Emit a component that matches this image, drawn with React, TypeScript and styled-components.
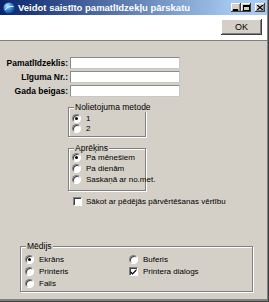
import React from "react";
import styled, { createGlobalStyle } from "styled-components";

const Global = createGlobalStyle`
  html, body { margin: 0; padding: 0; background: #d4d0c8; }
  body { font-family: "Liberation Sans", Arial, sans-serif; font-size: 8px; color: #000; }
  * { box-sizing: border-box; }
`;

const Window = styled.div`
  width: 269px;
  height: 302px;
  display: flex;
  flex-direction: column;
  background: #d4d0c8;
  border-right: 1px solid #404040;
  border-bottom: 1px solid #404040;
  overflow: hidden;
`;

const Frame = styled.div`
  flex: 1;
  min-height: 0;
  display: flex;
  flex-direction: column;
  border-right: 1px solid #808080;
  border-bottom: 2px solid #808080;
`;

const TitleBar = styled.div`
  height: 15px;
  flex: none;
  display: flex;
  align-items: center;
  padding: 0 2px 0 3px;
  background: linear-gradient(to right, #0a246a 0%, #a6caf0 88%);
  color: #fff;
  font-weight: bold;
  font-size: 9.5px;
`;

const TitleText = styled.span`
  margin-left: 3px;
  flex: 1;
  white-space: nowrap;
  line-height: 15px;
`;

const CaptionButton = styled.div<{ $sep?: boolean }>`
  width: 10px;
  height: 9px;
  margin-left: ${(p) => (p.$sep ? "4px" : "0")};
  background: #d4d0c8;
  box-shadow: inset -1px -1px 0 #404040, inset 1px 1px 0 #fff, inset -2px -2px 0 #808080;
  display: flex;
  align-items: center;
  justify-content: center;
  svg { display: block; }
`;

const Toolbar = styled.div`
  height: 26px;
  flex: none;
  background: #fff;
  display: flex;
  justify-content: flex-end;
  align-items: flex-start;
  padding: 4px 5px 0 0;
  border-bottom: 1px solid #808080;
`;

const Button = styled.button`
  width: 41px;
  height: 16px;
  padding: 0;
  border: none;
  background: #d4d0c8;
  box-shadow: inset -1px -1px 0 #404040, inset 1px 1px 0 #fff, inset -2px -2px 0 #808080;
  font-family: "Liberation Sans", Arial, sans-serif;
  font-size: 9px;
  color: #000;
`;

const Body = styled.div`
  flex: 1;
  display: flex;
  flex-direction: column;
  align-items: flex-start;
  padding-top: 16px;
`;

const Form = styled.div`
  display: grid;
  grid-template-columns: 68px 110px;
  column-gap: 2px;
  row-gap: 2px;
  align-items: center;
`;

const Label = styled.label`
  font-weight: bold;
  font-size: 8.5px;
  text-align: right;
  white-space: nowrap;
  line-height: 12px;
`;

const Input = styled.input`
  height: 12px;
  width: 110px;
  margin: 0;
  padding: 0 2px;
  background: #fff;
  border: 1px solid;
  border-color: #8c8c8c #c8c8c8 #c8c8c8 #8c8c8c;
  font-size: 8px;
  outline: none;
`;

const GroupBox = styled.div<{ $left: number; $width: number; $top: number; $pad: string }>`
  position: relative;
  margin: ${(p) => p.$top}px 0 0 ${(p) => p.$left}px;
  width: ${(p) => p.$width}px;
  padding: ${(p) => p.$pad};
  border: 1px solid #808080;
  box-shadow: inset 1px 1px 0 #fff, 1px 1px 0 #fff;
`;

const Legend = styled.span`
  position: absolute;
  top: -5px;
  left: 5px;
  padding: 0 1px;
  font-size: 8.5px;
  line-height: 9px;
  background: #d4d0c8;
  white-space: nowrap;
`;

const Option = styled.label<{ $h: number }>`
  display: flex;
  align-items: center;
  gap: 5px;
  height: ${(p) => p.$h}px;
  white-space: nowrap;
  line-height: 9px;
`;

const Radio = styled.span<{ $checked?: boolean }>`
  position: relative;
  flex: none;
  width: 9px;
  height: 9px;
  border-radius: 50%;
  background: #fff;
  border: 1px solid;
  border-color: #808080 #fff #fff #808080;
  box-shadow: inset 1px 1px 0 #404040;
  &::after {
    content: "";
    display: ${(p) => (p.$checked ? "block" : "none")};
    position: absolute;
    left: 2px;
    top: 2px;
    width: 3px;
    height: 3px;
    border-radius: 50%;
    background: #000;
  }
`;

const Check = styled.span`
  flex: none;
  width: 9px;
  height: 9px;
  background: #fff;
  border: 1px solid;
  border-color: #808080 #fff #fff #808080;
  box-shadow: inset 1px 1px 0 #404040;
  display: flex;
  align-items: center;
  justify-content: center;
  svg { display: block; }
`;

const CheckRow = styled(Option)`
  margin: 6px 0 0 73px;
  gap: 4px;
`;

const MediaGrid = styled.div`
  display: grid;
  grid-template-columns: 104px 1fr;
  grid-auto-flow: column;
  grid-template-rows: repeat(3, 12px);
`;

const TitleIcon = () => (
  <svg width="12" height="12" viewBox="0 0 12 12">
    <defs>
      <radialGradient id="g" cx="35%" cy="30%" r="75%">
        <stop offset="0" stopColor="#bfe3ff" />
        <stop offset="0.5" stopColor="#3d8fe0" />
        <stop offset="1" stopColor="#0b3f9c" />
      </radialGradient>
    </defs>
    <circle cx="6" cy="6" r="5.5" fill="url(#g)" />
    <path d="M2 8 C4 5 7 4 10.5 4.5" stroke="#fff" strokeWidth="1" fill="none" opacity="0.85" />
  </svg>
);

const CheckMark = () => (
  <svg width="7" height="7" viewBox="0 0 7 7">
    <path d="M0.5 3 L2.5 5 L6.5 1 L6.5 2.8 L2.5 6.8 L0.5 4.8 Z" fill="#000" />
  </svg>
);

export default function App() {
  return (
    <>
      <Global />
      <Window>
        <Frame>
          <TitleBar>
            <TitleIcon />
            <TitleText>Veidot saistīto pamatlīdzekļu pārskatu</TitleText>
            <CaptionButton>
              <svg width="6" height="6" viewBox="0 0 6 6">
                <rect x="0" y="4" width="5" height="2" fill="#000" />
              </svg>
            </CaptionButton>
            <CaptionButton>
              <svg width="7" height="6" viewBox="0 0 7 6">
                <path d="M0 0 H7 V6 H0 Z M1 2 V5 H6 V2 Z" fill="#000" fillRule="evenodd" />
              </svg>
            </CaptionButton>
            <CaptionButton $sep>
              <svg width="6" height="5" viewBox="0 0 6 5">
                <path d="M0 0 L6 5 M6 0 L0 5" stroke="#000" strokeWidth="1.3" />
              </svg>
            </CaptionButton>
          </TitleBar>
          <Toolbar>
            <Button>OK</Button>
          </Toolbar>
          <Body>
            <Form>
              <Label>Pamatlīdzeklis:</Label>
              <Input />
              <Label>Līguma Nr.:</Label>
              <Input />
              <Label>Gada beigas:</Label>
              <Input />
            </Form>

            <GroupBox $left={68} $width={78} $top={10} $pad="5px 0 3px 3px">
              <Legend>Nolietojuma metode</Legend>
              <Option $h={10}><Radio $checked />1</Option>
              <Option $h={10}><Radio />2</Option>
            </GroupBox>

            <GroupBox $left={68} $width={78} $top={11} $pad="3px 0 5px 3px">
              <Legend>Aprēķins</Legend>
              <Option $h={11}><Radio $checked />Pa mēnešiem</Option>
              <Option $h={11}><Radio />Pa dienām</Option>
              <Option $h={11}><Radio />Saskaņā ar no.met.</Option>
            </GroupBox>

            <CheckRow $h={9}>
              <Check />
              Sākot ar pēdējās pārvērtēšanas vērtību
            </CheckRow>

            <GroupBox $left={20} $width={233} $top={40} $pad="6px 0 2px 4px">
              <Legend>Mēdijs</Legend>
              <MediaGrid>
                <Option $h={12}><Radio $checked />Ekrāns</Option>
                <Option $h={12}><Radio />Printeris</Option>
                <Option $h={12}><Radio />Fails</Option>
                <Option $h={12}><Radio />Buferis</Option>
                <Option $h={12}><Check><CheckMark /></Check>Printera dialogs</Option>
              </MediaGrid>
            </GroupBox>
          </Body>
        </Frame>
      </Window>
    </>
  );
}
